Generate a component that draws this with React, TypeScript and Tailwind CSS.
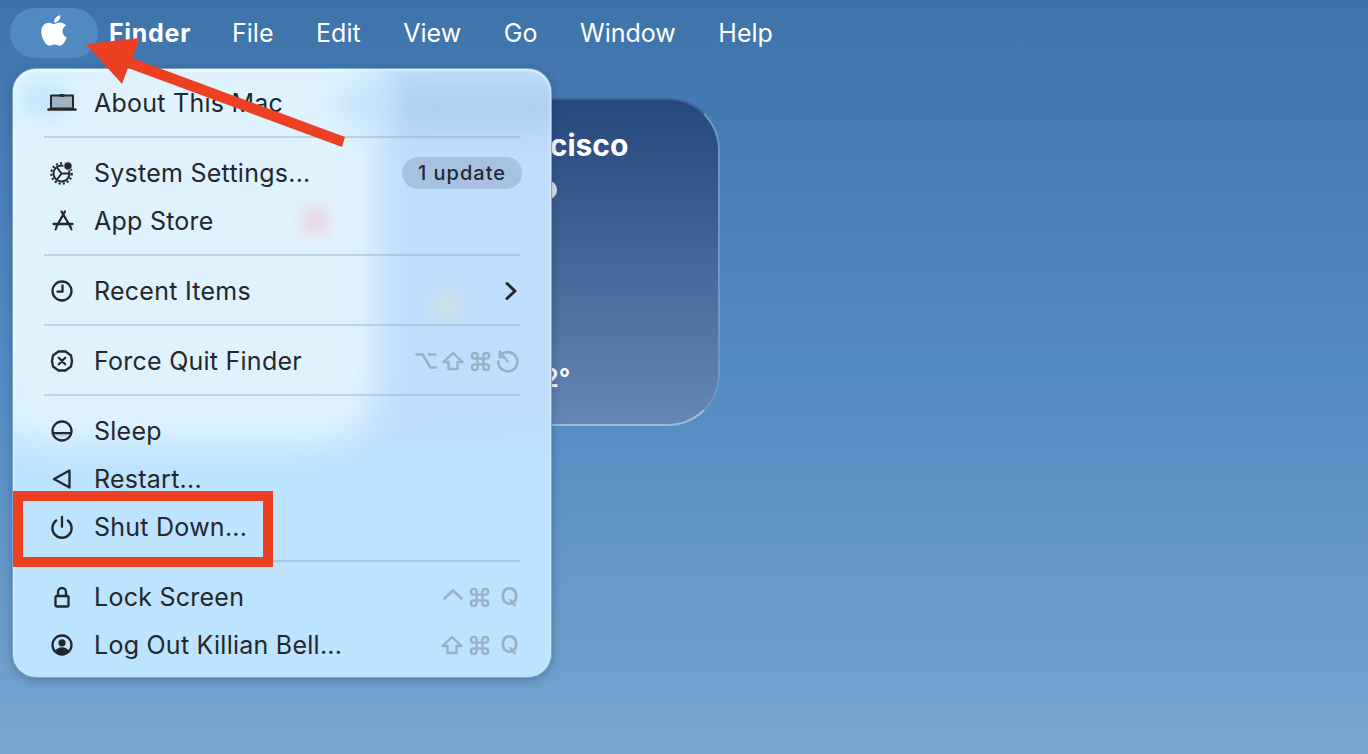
import React from "react";
import { Command } from "lucide-react";

const s = { fill: "none", stroke: "currentColor", strokeWidth: 2.3, strokeLinecap: "round", strokeLinejoin: "round" } as const;

const Apple = () => (
  <svg width="26" height="35" viewBox="0 0 384 512" fill="white" className="mb-[5px]">
    <path d="M318.7 268.7c-.2-36.7 16.4-64.4 50-84.8-18.8-26.9-47.2-41.7-84.7-44.6-35.5-2.8-74.3 20.7-88.5 20.7-15 0-49.4-19.7-76.4-19.7C63.3 141.2 4 184.8 4 273.5q0 39.3 14.4 81.2c12.8 36.7 59 126.7 107.2 125.2 25.2-.6 43-17.9 75.8-17.9 31.8 0 48.3 17.9 76.4 17.9 48.6-.7 90.4-82.5 102.6-119.3-65.2-30.7-61.7-90-61.7-91.9zm-56.6-164.2c27.3-32.4 24.8-61.9 24-72.5-24.1 1.4-52 16.4-67.9 34.9-17.5 19.8-27.8 44.3-25.6 71.9 26.1 2 49.9-11.4 69.5-34.3z" />
  </svg>
);

const Laptop = () => (
  <svg width="30" height="20" viewBox="0 0 30 20">
    <path d="M4 2.500h22v13H4z" fill="#9fb2c4" stroke="#24272b" strokeWidth="2" strokeLinejoin="round" />
    <path d="M12.500 2.500h5" stroke="#24272b" strokeWidth="3" />
    <path d="M1.500 16.500h27" stroke="#24272b" strokeWidth="2.600" strokeLinecap="round" />
  </svg>
);

const Gear = () => (
  <svg width="26" height="26" viewBox="0 0 26 26">
    <circle cx="12.500" cy="13.500" r="10.200" {...s} strokeWidth="2.200" strokeLinecap="butt" strokeDasharray="2.100 2.100" />
    <circle cx="12.500" cy="13.500" r="8" {...s} strokeWidth="2" />
    <path d="M12.500 13.500L8 7.500M12.500 13.500H20M12.500 13.500L8 19.500" {...s} strokeWidth="2" />
    <circle cx="19" cy="6" r="4.200" fill="#24272b" stroke="#dff3ff" strokeWidth="1" />
  </svg>
);

const AppStoreIcon = () => (
  <svg width="24" height="24" viewBox="0 0 24 24">
    <path d="M15 2.500L6.500 17.500M11.500 2.500L20.500 18M3.500 15h19" {...s} />
    <path d="M5.500 20.500l1-2M21.500 20.500l-1-2.500" {...s} strokeWidth="2" />
  </svg>
);

const Clock = () => (
  <svg width="24" height="24" viewBox="0 0 24 24">
    <circle cx="12" cy="12" r="9.500" {...s} />
    <path d="M12.500 6.500v6.200H7.500" {...s} />
  </svg>
);

const ForceQuit = () => (
  <svg width="24" height="24" viewBox="-1 0 24 24">
    <path d="M7.500 2.500h7L20 6.500 21 12l-1 5.500-5.500 4h-7L2 17.500 1 12l1-5.500z" {...s} />
    <path d="M7.800 8.800l6.400 6.400M14.200 8.800l-6.400 6.400" {...s} />
  </svg>
);

const SleepIcon = () => (
  <svg width="24" height="24" viewBox="0 0 24 24">
    <path d="M4.200 14.200h15.600a9.500 9.500 0 0 1-15.600 0z" fill="#a9c8e4" opacity="0.6" />
    <circle cx="12" cy="12" r="9.500" {...s} />
    <path d="M3 14.200h18" {...s} />
  </svg>
);

const RestartIcon = () => (
  <svg width="24" height="24" viewBox="0 0 24 24">
    <path d="M19.500 3.500v17L4 12z" {...s} />
  </svg>
);

const Power = () => (
  <svg width="24" height="24" viewBox="0 0 24 24">
    <path d="M6.200 5.500a9.600 9.600 0 1 0 11.600 0" {...s} />
    <path d="M12 1.800v10" {...s} />
  </svg>
);

const Lock = () => (
  <svg width="24" height="24" viewBox="0 0 24 24">
    <path d="M8 11V7a4 4 0 0 1 8 0v4" {...s} />
    <rect x="5.500" y="11" width="13" height="10.500" rx="1.600" {...s} />
  </svg>
);

const UserIcon = () => (
  <svg width="24" height="24" viewBox="0 0 24 24">
    <circle cx="12" cy="12" r="9.500" {...s} />
    <circle cx="12" cy="9.800" r="3.600" fill="#24272b" />
    <path d="M5 18.500c1.500-3 4-4.200 7-4.200s5.500 1.200 7 4.200c-2 2-4.300 3-7 3s-5-1-7-3z" fill="#24272b" />
  </svg>
);

const Chevron = () => (
  <svg width="14" height="20" viewBox="0 0 14 20" className="mr-[2px]">
    <path d="M3 2.500l8 7.500-8 7.500" fill="none" stroke="#24272b" strokeWidth="3" strokeLinecap="round" strokeLinejoin="round" />
  </svg>
);

const OptionKey = () => (
  <svg width="22" height="20" viewBox="0 0 22 20">
    <path d="M1.500 3.500h6l8 13h5M14 3.500h6.500" {...s} strokeWidth="2.600" />
  </svg>
);

const ShiftKey = () => (
  <svg width="24" height="20" viewBox="0 0 24 20">
    <path d="M12 2L2.500 11h5v7h9v-7h5z" {...s} strokeWidth="2.400" />
  </svg>
);

const CtrlKey = () => (
  <svg width="22" height="20" viewBox="0 0 22 20">
    <path d="M2.500 11.500L11 3.500l8.500 8" {...s} strokeWidth="2.600" />
  </svg>
);

const ReloadKey = () => (
  <svg width="23" height="23" viewBox="0 0 23 23">
    <path d="M5 5a9.600 9.600 0 1 1-2.800 6.500" {...s} strokeWidth="2.600" />
    <path d="M4 1.500L11.500 11.500M3.500 2v5.500h5" {...s} strokeWidth="2.200" />
  </svg>
);

const Cmd = () => <Command size={23} strokeWidth={2.5} />;

const Row = ({ icon, label, right }: { icon: React.ReactNode; label: string; right?: React.ReactNode }) => (
  <div className="flex h-[48px] items-center">
    <div className="mr-[14px] flex w-[36px] shrink-0 justify-center">{icon}</div>
    <span className="whitespace-nowrap">{label}</span>
    {right && <div className="ml-auto flex items-center">{right}</div>}
  </div>
);

const Sep = () => <div className="mb-[11px] mt-[9px] h-[2px] bg-[#8ea6bd]/40" />;

const Keys = ({ children }: { children: React.ReactNode }) => (
  <div className="flex items-center gap-[4px] pr-[1px] text-[#99afc3]">{children}</div>
);

const QKey = () => <span className="ml-[5px] text-[24px] font-medium leading-none">Q</span>;

export default function App() {
  const menuItems = ["File", "Edit", "View", "Go", "Window", "Help"];
  return (
    <div className="relative h-[754px] w-[1368px] overflow-hidden bg-gradient-to-b from-[#3e73aa] via-[#538bc3] to-[#77a6d0] font-['Inter','Noto_Sans',sans-serif]">
      <header className="flex h-[66px] items-center pl-[10px] text-[25px] text-white">
        <div className="flex h-[50px] w-[88px] items-center justify-center rounded-[25px] bg-[#5189c1]">
          <Apple />
        </div>
        <span className="ml-[11px] mt-[2px] font-bold tracking-[0.7px]">Finder</span>
        <nav className="ml-[41px] mt-[2px] flex gap-[42.6px]">
          {menuItems.map((m) => (
            <span key={m}>{m}</span>
          ))}
        </nav>
      </header>

      {/* Weather widget on the desktop */}
      <div className="absolute left-[340px] top-[98px] flex h-[328px] w-[380px] flex-col rounded-[52px] border-2 border-[#3d639a] border-b-[#9dbde0] border-r-[#6f96c6] bg-gradient-to-b from-[#26477c] to-[#6687b5] text-white">
        <div className="pl-[80px] pt-[25px] text-[30px] font-bold leading-[40px] whitespace-nowrap">San Francisco</div>
        <div className="ml-[195px] mt-[15px] h-[20px] w-[20px] rounded-full bg-[#e6e6e6]" />
        <div className="mb-[31px] ml-[89px] mt-auto text-[25px] font-semibold leading-[30px] whitespace-nowrap">H:72° L:52°</div>
      </div>

      {/* Apple menu */}
      <div className="absolute left-[12px] top-[68px] h-[610px] w-[540px] overflow-hidden rounded-[24px] border border-[#4f7da6]/60 bg-[#bde3fe] shadow-[0_2px_10px_rgba(20,50,90,0.35)]">
        <div className="absolute left-[300px] top-[-10px] h-[385px] w-[270px] rounded-br-[40px] bg-[#c1ddfc] blur-[16px]" />
        <div className="absolute left-[370px] top-[12px] h-[50px] w-[200px] rounded-[30px] bg-[#b1cff0] blur-[14px]" />
        <div className="absolute left-[-40px] top-[-40px] h-[415px] w-[405px] rounded-bl-[80px] rounded-br-[60px] bg-[#dff3ff] blur-[18px]" />
        <div className="absolute left-[320px] top-[12px] h-[46px] w-[60px] rounded-full bg-[#bfe0fa] opacity-70 blur-[14px]" />
        <div className="absolute left-[8px] top-[14px] h-[34px] w-[50px] rounded-full bg-[#c3e6fc] blur-[10px]" />
        <div className="absolute left-[288px] top-[138px] h-[28px] w-[28px] rounded-full bg-[#fbb9c8] opacity-60 blur-[9px]" />
        <div className="absolute left-[418px] top-[222px] h-[30px] w-[30px] rounded-full bg-[#dfe8c8] opacity-50 blur-[9px]" />
        <div className="absolute inset-0 rounded-[24px] shadow-[inset_0_1px_3px_rgba(255,255,255,0.9)]" />

        <div className="relative px-[31px] py-[10px] text-[25px] leading-none tracking-[0.25px] text-[#24272b]">
          <Row icon={<Laptop />} label="About This Mac" />
          <Sep />
          <Row
            icon={<Gear />}
            label="System Settings..."
            right={
              <span className="-mr-[2px] flex h-[32px] w-[120px] items-center justify-center rounded-full bg-[#8ea7c4]/50 text-[20px] font-medium tracking-[1px]">
                1 update
              </span>
            }
          />
          <Row icon={<AppStoreIcon />} label="App Store" />
          <Sep />
          <Row icon={<Clock />} label="Recent Items" right={<Chevron />} />
          <Sep />
          <Row
            icon={<ForceQuit />}
            label="Force Quit Finder"
            right={
              <Keys>
                <OptionKey />
                <ShiftKey />
                <Cmd />
                <ReloadKey />
              </Keys>
            }
          />
          <Sep />
          <Row icon={<SleepIcon />} label="Sleep" />
          <Row icon={<RestartIcon />} label="Restart..." />
          <Row icon={<Power />} label="Shut Down..." />
          <Sep />
          <Row
            icon={<Lock />}
            label="Lock Screen"
            right={
              <Keys>
                <CtrlKey />
                <Cmd />
                <QKey />
              </Keys>
            }
          />
          <Row
            icon={<UserIcon />}
            label="Log Out Killian Bell..."
            right={
              <Keys>
                <ShiftKey />
                <Cmd />
                <QKey />
              </Keys>
            }
          />
        </div>
      </div>

      {/* Annotations */}
      <div className="absolute left-[13px] top-[491px] h-[76px] w-[260px] border-[10px] border-[#ec4023]" />
      <svg className="absolute left-0 top-0" width="400" height="160" viewBox="0 0 400 160">
        <polygon points="86,44 140,38 132,58 345,137 342,147 128,68 122,84" fill="#ec4023" />
      </svg>
    </div>
  );
}
